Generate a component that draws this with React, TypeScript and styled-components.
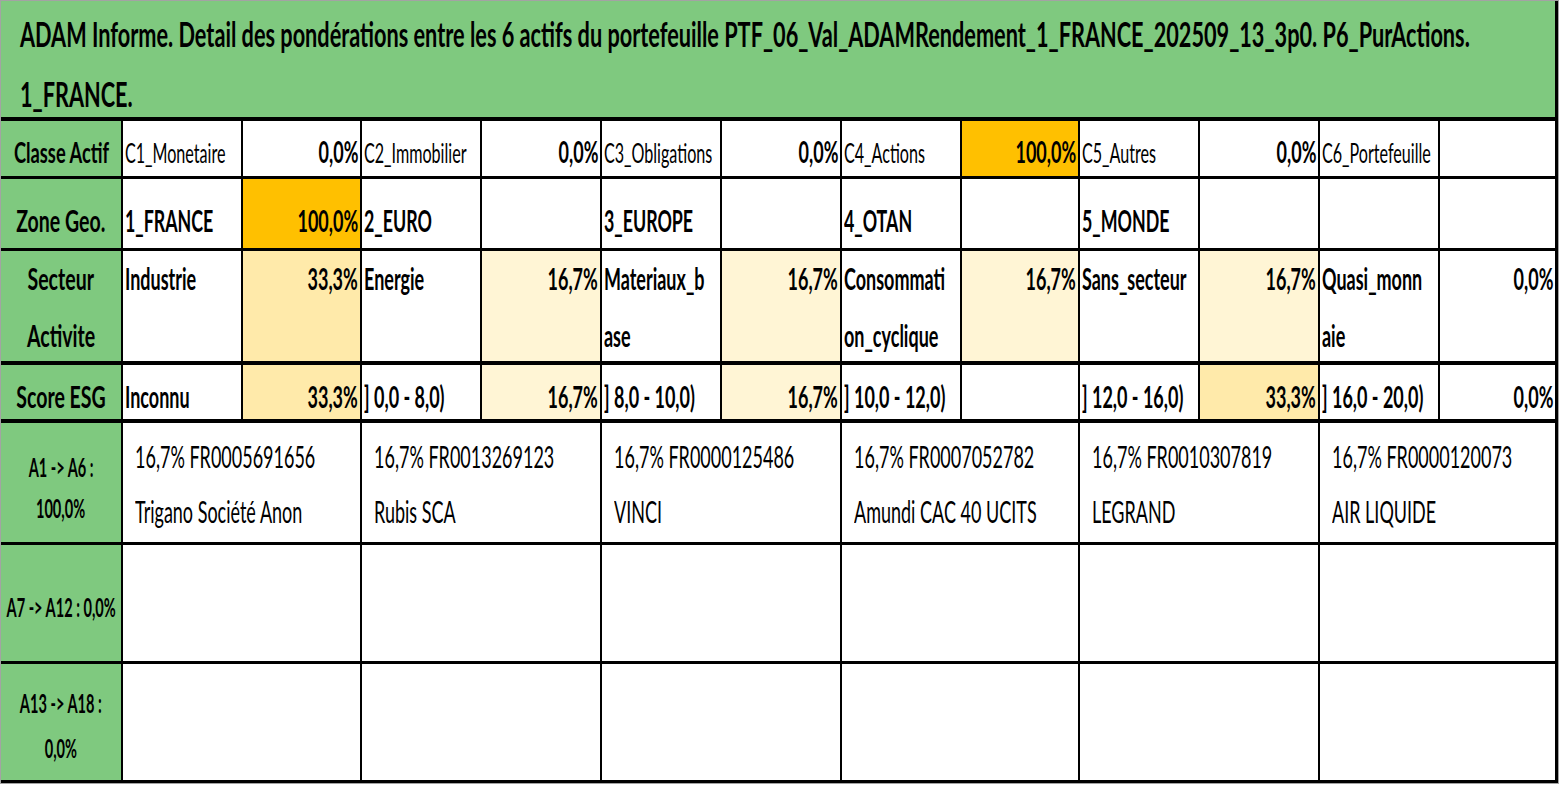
import React from "react";
import styled, { createGlobalStyle } from "styled-components";

const FONT = `Lato, "Open Sans", "Liberation Sans", sans-serif`;
const GREEN = "#7FC97F";
const COLS =
  "120px 118px 117px 118px 118px 118px 118px 118px 116px 118px 118px 118px 115px";

const heat = (t: number | null) =>
  t === null
    ? "#ffffff"
    : `rgb(255, ${Math.round(255 - 63 * t)}, ${Math.round(255 - 255 * t)})`;

const pct = (v: number) => `${(v * 100).toFixed(1).replace(".", ",")}%`;

const Global = createGlobalStyle`
  *, *::before, *::after { box-sizing: border-box; }
  html, body { margin: 0; padding: 0; background: #fff; overflow: hidden; }
`;

const Frame = styled.div`
  width: 1559px;
  border: 1px solid #a3a3a3;
  font-family: ${FONT};
  color: #000;
`;

const Sheet = styled.div`
  border-right: 3px solid #000;
  border-bottom: 3px solid #000;
  display: flex;
  flex-direction: column;
`;

const Title = styled.div<{ $pt: number; $gap: number }>`
  height: 120px;
  background: ${GREEN};
  border-bottom: 4px solid #000;
  padding: ${(p) => p.$pt}px 0 0 19px;
  display: flex;
  flex-direction: column;
  align-items: flex-start;
  gap: ${(p) => p.$gap}px;
  overflow: hidden;
`;

const Row = styled.div<{ $h: number; $line: number }>`
  display: grid;
  grid-template-columns: ${COLS};
  column-gap: 2px;
  height: ${(p) => p.$h}px;
  border-bottom: ${(p) => p.$line}px solid #000;
  background: #000;
`;

const Cell = styled.div<{ $pt: number; $gap?: number; $bg?: string }>`
  background: ${(p) => p.$bg ?? "#fff"};
  display: flex;
  flex-direction: column;
  gap: ${(p) => p.$gap ?? 0}px;
  padding-top: ${(p) => p.$pt}px;
  overflow: hidden;
  min-width: 0;
`;

const LabelCell = styled(Cell)`
  background: ${GREEN};
  align-items: center;
`;

const NameCell = styled(Cell)`
  align-items: flex-start;
  padding-left: 2px;
`;

const PctCell = styled(Cell)`
  align-items: flex-end;
  padding-right: 2px;
`;

const AssetCell = styled(Cell)`
  grid-column: span 2;
  align-items: flex-start;
  padding-left: 12px;
`;

const Squeezed = styled.span<{ $fs: number; $sx: number }>`
  display: block;
  white-space: nowrap;
  line-height: 1;
  font-size: ${(p) => p.$fs}px;
  transform: scaleX(${(p) => p.$sx});
`;

const TitleText = styled(Squeezed)`
  font-weight: 700;
  transform-origin: left center;
`;

const LabelText = styled(Squeezed)`
  font-weight: 700;
  transform-origin: center center;
`;

const NameText = styled(Squeezed)<{ $bold?: boolean }>`
  font-weight: ${(p) => (p.$bold ? 700 : 400)};
  transform-origin: left center;
`;

const PctText = styled(Squeezed)`
  font-weight: 700;
  transform-origin: right center;
`;

const AssetText = styled(Squeezed)`
  font-weight: 400;
  transform-origin: left center;
`;

// padding-top so that the first baseline sits `base` px below the cell top
const topFor = (base: number, fs: number) => base - 0.887 * fs;

type Item = { lines: string[]; value: number | null };

type UpperRow = {
  label: string[];
  labelFs: number;
  labelSx: number;
  nameFs: number;
  nameSx: number;
  nameBold: boolean;
  pctFs: number;
  pctSx: number;
  base: number;
  step: number;
  h: number;
  line: number;
  items: Item[];
};

const upperRows: UpperRow[] = [
  {
    label: ["Classe Actif"],
    labelFs: 29,
    labelSx: 0.63,
    nameFs: 26,
    nameSx: 0.62,
    nameBold: false,
    pctFs: 30,
    pctSx: 0.6,
    base: 42,
    step: 0,
    h: 58,
    line: 3,
    items: [
      { lines: ["C1_Monetaire"], value: 0 },
      { lines: ["C2_Immobilier"], value: 0 },
      { lines: ["C3_Obligations"], value: 0 },
      { lines: ["C4_Actions"], value: 1 },
      { lines: ["C5_Autres"], value: 0 },
      { lines: ["C6_Portefeuille"], value: null },
    ],
  },
  {
    label: ["Zone Geo."],
    labelFs: 31,
    labelSx: 0.63,
    nameFs: 31,
    nameSx: 0.575,
    nameBold: true,
    pctFs: 30,
    pctSx: 0.6,
    base: 53,
    step: 0,
    h: 72,
    line: 3,
    items: [
      { lines: ["1_FRANCE"], value: 1 },
      { lines: ["2_EURO"], value: null },
      { lines: ["3_EUROPE"], value: null },
      { lines: ["4_OTAN"], value: null },
      { lines: ["5_MONDE"], value: null },
      { lines: [""], value: null },
    ],
  },
  {
    label: ["Secteur", "Activite"],
    labelFs: 31,
    labelSx: 0.63,
    nameFs: 31,
    nameSx: 0.58,
    nameBold: true,
    pctFs: 30,
    pctSx: 0.6,
    base: 39,
    step: 57,
    h: 114,
    line: 4,
    items: [
      { lines: ["Industrie"], value: 1 / 3 },
      { lines: ["Energie"], value: 1 / 6 },
      { lines: ["Materiaux_b", "ase"], value: 1 / 6 },
      { lines: ["Consommati", "on_cyclique"], value: 1 / 6 },
      { lines: ["Sans_secteur"], value: 1 / 6 },
      { lines: ["Quasi_monn", "aie"], value: 0 },
    ],
  },
  {
    label: ["Score ESG"],
    labelFs: 31,
    labelSx: 0.63,
    nameFs: 31,
    nameSx: 0.58,
    nameBold: true,
    pctFs: 30,
    pctSx: 0.6,
    base: 43,
    step: 0,
    h: 58,
    line: 4,
    items: [
      { lines: ["Inconnu"], value: 1 / 3 },
      { lines: ["] 0,0 - 8,0)"], value: 1 / 6 },
      { lines: ["] 8,0 - 10,0)"], value: 1 / 6 },
      { lines: ["] 10,0 - 12,0)"], value: null },
      { lines: ["] 12,0 - 16,0)"], value: 1 / 3 },
      { lines: ["] 16,0 - 20,0)"], value: 0 },
    ],
  },
];

type LowerRow = {
  label: string[];
  base: number;
  step: number;
  h: number;
  line: number;
  assets: string[][];
};

const LOWER_LABEL_FS = 27;
const LOWER_LABEL_SX = 0.54;
const ASSET_FS = 30;
const ASSET_SX = 0.6;
const ASSET_BASE = 45;
const ASSET_STEP = 55;

const emptyAssets: string[][] = [[], [], [], [], [], []];

const lowerRows: LowerRow[] = [
  {
    label: ["A1 -> A6 :", "100,0%"],
    base: 54,
    step: 41,
    h: 122,
    line: 3,
    assets: [
      ["16,7% FR0005691656", "Trigano Société Anon"],
      ["16,7% FR0013269123", "Rubis SCA"],
      ["16,7% FR0000125486", "VINCI"],
      ["16,7% FR0007052782", "Amundi CAC 40 UCITS"],
      ["16,7% FR0010307819", "LEGRAND"],
      ["16,7% FR0000120073", "AIR LIQUIDE"],
    ],
  },
  {
    label: ["A7 -> A12 : 0,0%"],
    base: 72,
    step: 0,
    h: 119,
    line: 3,
    assets: emptyAssets,
  },
  {
    label: ["A13 -> A18 :", "0,0%"],
    base: 49,
    step: 45,
    h: 116,
    line: 0,
    assets: emptyAssets,
  },
];

const TITLE_FS = 35;
const TITLE_SX = 0.62;
const titleLines = [
  "ADAM Informe. Detail des pondérations entre les 6 actifs du portefeuille PTF_06_Val_ADAMRendement_1_FRANCE_202509_13_3p0. P6_PurActions.",
  "1_FRANCE.",
];

export default function App() {
  return (
    <>
      <Global />
      <Frame>
        <Sheet>
          <Title $pt={topFor(46, TITLE_FS)} $gap={60 - TITLE_FS}>
            {titleLines.map((t) => (
              <TitleText key={t} $fs={TITLE_FS} $sx={TITLE_SX}>
                {t}
              </TitleText>
            ))}
          </Title>

          {upperRows.map((r) => (
            <Row key={r.label.join(" ")} $h={r.h} $line={r.line}>
              <LabelCell
                $pt={topFor(r.base, r.labelFs)}
                $gap={r.step - r.labelFs}
              >
                {r.label.map((l) => (
                  <LabelText key={l} $fs={r.labelFs} $sx={r.labelSx}>
                    {l}
                  </LabelText>
                ))}
              </LabelCell>
              {r.items.map((it, i) => (
                <React.Fragment key={i}>
                  <NameCell
                    $pt={topFor(r.base, r.nameFs)}
                    $gap={r.step - r.nameFs}
                  >
                    {it.lines.map((l, j) => (
                      <NameText
                        key={j}
                        $fs={r.nameFs}
                        $sx={r.nameSx}
                        $bold={r.nameBold}
                      >
                        {l || "\u00a0"}
                      </NameText>
                    ))}
                  </NameCell>
                  <PctCell $pt={topFor(r.base, r.pctFs)} $bg={heat(it.value)}>
                    {it.value !== null && (
                      <PctText $fs={r.pctFs} $sx={r.pctSx}>
                        {pct(it.value)}
                      </PctText>
                    )}
                  </PctCell>
                </React.Fragment>
              ))}
            </Row>
          ))}

          {lowerRows.map((r) => (
            <Row key={r.label.join(" ")} $h={r.h} $line={r.line}>
              <LabelCell
                $pt={topFor(r.base, LOWER_LABEL_FS)}
                $gap={r.step - LOWER_LABEL_FS}
              >
                {r.label.map((l) => (
                  <LabelText key={l} $fs={LOWER_LABEL_FS} $sx={LOWER_LABEL_SX}>
                    {l}
                  </LabelText>
                ))}
              </LabelCell>
              {r.assets.map((a, i) => (
                <AssetCell
                  key={i}
                  $pt={topFor(ASSET_BASE, ASSET_FS)}
                  $gap={ASSET_STEP - ASSET_FS}
                >
                  {a.map((l) => (
                    <AssetText key={l} $fs={ASSET_FS} $sx={ASSET_SX}>
                      {l}
                    </AssetText>
                  ))}
                </AssetCell>
              ))}
            </Row>
          ))}
        </Sheet>
      </Frame>
    </>
  );
}
